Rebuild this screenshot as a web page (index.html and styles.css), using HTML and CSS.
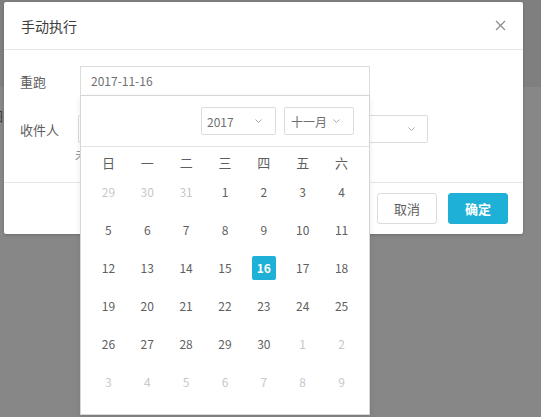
FILE: index.html
```html
<!DOCTYPE html>
<html lang="zh-CN">
<head>
<meta charset="utf-8">
<title>手动执行</title>
<link rel="stylesheet" href="styles.css">
</head>
<body>
<div class="backdrop">
  <div class="band-top"></div>
  <div class="band-bottom"></div>
  <span class="behind-char">图</span>
</div>

<div class="modal">
  <div class="modal-header">
    <span class="title">手动执行</span>
    <span class="close">
      <svg width="11" height="11" viewBox="0 0 11 11"><path d="M1 1 L10 10 M10 1 L1 10" stroke="#8c8c8c" stroke-width="1.2" fill="none"/></svg>
    </span>
  </div>

  <div class="modal-body">
    <div class="form-row">
      <span class="label">重跑</span>
      <div class="date-field">
        <div class="input">2017-11-16</div>
        <div class="picker">
          <div class="picker-head">
            <div class="mini-select year"><span>2017</span><svg width="7" height="4" viewBox="0 0 7 4"><path d="M0.5 0.5 L3.5 3.5 L6.5 0.5" stroke="#aaa" fill="none"/></svg></div>
            <div class="mini-select month"><span>十一月</span><svg width="7" height="4" viewBox="0 0 7 4"><path d="M0.5 0.5 L3.5 3.5 L6.5 0.5" stroke="#aaa" fill="none"/></svg></div>
          </div>
          <div class="picker-body">
            <div class="week-row">
              <span>日</span><span>一</span><span>二</span><span>三</span><span>四</span><span>五</span><span>六</span>
            </div>
            <div class="day-grid">
              <span class="day muted">29</span><span class="day muted">30</span><span class="day muted">31</span><span class="day">1</span><span class="day">2</span><span class="day">3</span><span class="day">4</span>
              <span class="day">5</span><span class="day">6</span><span class="day">7</span><span class="day">8</span><span class="day">9</span><span class="day">10</span><span class="day">11</span>
              <span class="day">12</span><span class="day">13</span><span class="day">14</span><span class="day">15</span><span class="day selected">16</span><span class="day">17</span><span class="day">18</span>
              <span class="day">19</span><span class="day">20</span><span class="day">21</span><span class="day">22</span><span class="day">23</span><span class="day">24</span><span class="day">25</span>
              <span class="day">26</span><span class="day">27</span><span class="day">28</span><span class="day">29</span><span class="day">30</span><span class="day muted">1</span><span class="day muted">2</span>
              <span class="day muted">3</span><span class="day muted">4</span><span class="day muted">5</span><span class="day muted">6</span><span class="day muted">7</span><span class="day muted">8</span><span class="day muted">9</span>
            </div>
          </div>
        </div>
      </div>
    </div>

    <div class="form-row row-2">
      <span class="label label-narrow">收件人</span>
      <div class="select-input">
        <svg width="7" height="4" viewBox="0 0 7 4"><path d="M0.5 0.5 L3.5 3.5 L6.5 0.5" stroke="#aaa" fill="none"/></svg>
      </div>
    </div>
    <div class="hint">未填</div>
  </div>

  <div class="modal-footer">
    <button class="btn">取消</button>
    <button class="btn btn-primary">确定</button>
  </div>
</div>
</body>
</html>
```

FILE: styles.css
```css
* { box-sizing: border-box; }

body {
  margin: 0;
  width: 541px;
  height: 417px;
  overflow: hidden;
  position: relative;
  font-family: "Noto Sans CJK SC", "Noto Sans", sans-serif;
}

.backdrop {
  position: absolute;
  inset: 0;
  display: flex;
  flex-direction: column;
}
.band-top { height: 87px; background: #7f7f7f; }
.band-bottom { flex: 1; background: #878787; }
.behind-char {
  position: absolute;
  left: -10px;
  top: 106px;
  font-size: 13px;
  color: #3a3a3a;
}

.modal {
  position: absolute;
  left: 4px;
  top: 2px;
  width: 519px;
  background: #fff;
  border-radius: 2px;
  box-shadow: 0 1px 3px rgba(0, 0, 0, 0.2);
}

.modal-header {
  height: 48px;
  padding: 0 17px 0 17px;
  display: flex;
  align-items: center;
  justify-content: space-between;
  border-bottom: 1px solid #e6e6e6;
}
.title { font-size: 14px; color: #3c3c3c; }
.close { display: flex; width: 11px; height: 11px; }

.modal-body { padding: 16px 16px 19px 16px; }

.form-row { display: flex; align-items: center; }
.row-2 { margin-top: 19px; }

.label { width: 60px; font-size: 13px; color: #5e5e5e; }
.label-narrow { width: 58px; }

.date-field { position: relative; width: 290px; }
.input {
  height: 30px;
  border: 1px solid #dcdcdc;
  padding: 0 10px;
  line-height: 28px;
  font-size: 12px;
  color: #707070;
}

.picker {
  position: absolute;
  top: 29px;
  left: 0;
  width: 290px;
  background: #fff;
  border: 1px solid #d6d6d6;
  z-index: 5;
  box-shadow: 0 2px 6px rgba(0, 0, 0, 0.08);
}
.picker-head {
  height: 51px;
  padding: 11px 15px 0 0;
  display: flex;
  justify-content: flex-end;
  gap: 8px;
  border-bottom: 1px solid #e3e3e3;
}
.mini-select {
  height: 28px;
  border: 1px solid #dcdcdc;
  border-radius: 2px;
  display: flex;
  align-items: center;
  justify-content: space-between;
  font-size: 12px;
  color: #707070;
}
.mini-select svg { display: block; }
.year { width: 75px; padding: 0 13px 0 5px; }
.month { width: 70px; padding: 0 13px 0 6px; }

.picker-body { padding: 6px 8px 13px 8px; }
.week-row {
  display: grid;
  grid-template-columns: repeat(7, 1fr);
  line-height: 20px;
  font-size: 13px;
  color: #5e5e5e;
  text-align: center;
}
.day-grid {
  display: grid;
  grid-template-columns: repeat(7, 1fr);
  grid-auto-rows: 38px;
  align-items: center;
  justify-items: center;
}
.day {
  width: 24px;
  height: 24px;
  line-height: 24px;
  text-align: center;
  font-size: 12px;
  color: #606060;
  border-radius: 2px;
}
.day.muted { color: #c8c8c8; }
.day.selected { background: #1eb0d6; color: #fff; font-weight: 600; }

.select-input {
  width: 350px;
  height: 28px;
  border: 1px solid #dcdcdc;
  border-radius: 2px;
  display: flex;
  align-items: center;
  justify-content: flex-end;
  padding-right: 12px;
}
.select-input svg { display: block; }

.hint {
  margin: 4px 0 0 55px;
  font-size: 12px;
  line-height: 16px;
  color: #888;
}

.modal-footer {
  border-top: 1px solid #e6e6e6;
  padding: 10px 15px 10px 15px;
  display: flex;
  justify-content: flex-end;
  gap: 11px;
}
.btn {
  width: 60px;
  height: 31px;
  font-family: inherit;
  font-size: 13px;
  border: 1px solid #dcdcdc;
  background: #fff;
  color: #5e5e5e;
  border-radius: 3px;
  padding: 0;
}
.btn-primary {
  background: #1eb0d6;
  border-color: #1eb0d6;
  color: #fff;
  font-weight: 600;
}
```
